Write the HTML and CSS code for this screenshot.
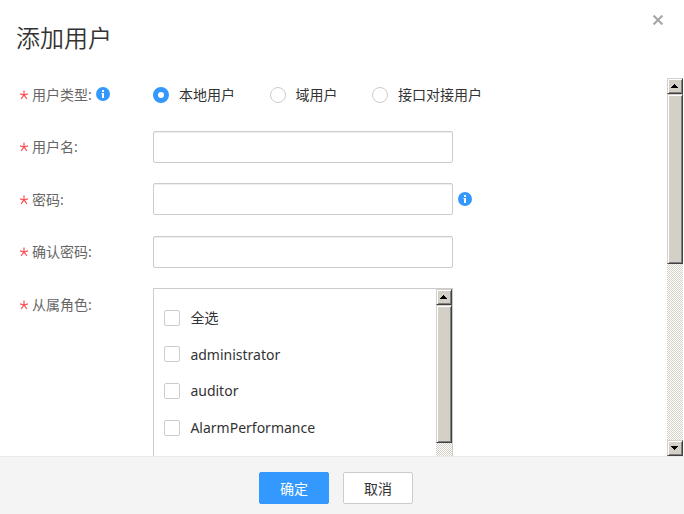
FILE: index.html
```html
<!DOCTYPE html>
<html lang="zh-CN">
<head>
<meta charset="utf-8">
<title>添加用户</title>
<link rel="stylesheet" href="styles.css">
</head>
<body>
<svg class="defs" width="0" height="0">
  <symbol id="star" viewBox="0 0 8 10"><path d="M4 .5V5M0 3.8 4 5 8 3.8M4 5 1.2 8.8M4 5 6.8 8.8" fill="none" stroke="#fa5055" stroke-width="1.2"/></symbol>
  <symbol id="info" viewBox="0 0 14 14"><circle cx="7" cy="7" r="7" fill="#39f"/><path d="M6 3h2v2H6zM5.5 6H8v5H6V7h-.5z" fill="#fff"/></symbol>
  <symbol id="up" viewBox="0 0 7 4"><path d="M3 0h1v1h1v1h1v1h1v1H0V3h1V2h1V1h1z"/></symbol>
  <symbol id="down" viewBox="0 0 7 4"><path d="M0 0h7v1H6v1H5v1H4v1H3V3H2V2H1V1H0z"/></symbol>
</svg>
<div class="dialog">
  <header class="head">
    <h1>添加用户</h1>
    <svg class="close" width="10" height="10" viewBox="0 0 10 10"><path d="M.6 .6l8.8 8.8M9.4 .6.6 9.4" stroke="#a6a6a6" stroke-width="2.1"/></svg>
  </header>
  <main class="body">
    <form class="form">
      <div class="row type">
        <div class="label"><svg class="star"><use href="#star"/></svg><span>用户类型:</span><svg class="info"><use href="#info"/></svg></div>
        <div class="radios">
          <label class="radio"><i class="dot on"></i>本地用户</label>
          <label class="radio"><i class="dot"></i>域用户</label>
          <label class="radio"><i class="dot"></i>接口对接用户</label>
        </div>
      </div>
      <div class="row">
        <div class="label"><svg class="star"><use href="#star"/></svg><span>用户名:</span></div>
        <input class="field" type="text">
      </div>
      <div class="row password">
        <div class="label"><svg class="star"><use href="#star"/></svg><span>密码:</span></div>
        <input class="field" type="password"><svg class="info"><use href="#info"/></svg>
      </div>
      <div class="row">
        <div class="label"><svg class="star"><use href="#star"/></svg><span>确认密码:</span></div>
        <input class="field" type="password">
      </div>
      <div class="row roles">
        <div class="label"><svg class="star"><use href="#star"/></svg><span>从属角色:</span></div>
        <div class="list">
          <div class="items">
            <label class="item"><i class="box"></i>全选</label>
            <label class="item"><i class="box"></i>administrator</label>
            <label class="item"><i class="box"></i>auditor</label>
            <label class="item"><i class="box"></i>AlarmPerformance</label>
          </div>
          <div class="bar"><div class="btn"><svg><use href="#up"/></svg></div><div class="thumb inner"></div></div>
        </div>
      </div>
    </form>
    <div class="bar"><div class="btn"><svg><use href="#up"/></svg></div><div class="thumb outer"></div><div class="btn last"><svg><use href="#down"/></svg></div></div>
  </main>
  <footer class="foot">
    <button class="action primary" type="button">确定</button>
    <button class="action" type="button">取消</button>
  </footer>
</div>
</body>
</html>
```
FILE: styles.css
```css
* { box-sizing: border-box; }
body { margin: 0; background: #fff; color: #333; font: 14px/20px "Noto Sans", "Noto Sans CJK SC", sans-serif; }
.defs { position: absolute; }
.dialog { width: 684px; height: 514px; display: flex; flex-direction: column; overflow: hidden; }
.head { height: 78px; flex: none; display: flex; justify-content: space-between; padding: 15px 21px 0 16px; }
h1 { margin: 6px 0 0; font-size: 24px; line-height: 34px; font-weight: 350; }
.close { display: block; }
.body { height: 378px; flex: none; display: flex; padding-right: 1px; overflow: hidden; }
.form { flex: 1; padding-left: 20px; }
.row { display: flex; align-items: center; height: 32px; margin-bottom: 20px; }
.row.type { height: 34px; margin-bottom: 19px; }
.row.password { margin-bottom: 21px; }
.row.roles { height: 168px; margin: 0; align-items: stretch; }
.label { width: 133px; height: 32px; flex: none; display: flex; align-items: center; color: #666; }
.password .label { height: 34px; padding-top: 2px; }
.roles .label { height: 34px; }
.star { width: 8px; height: 10px; margin-right: 4px; }
.info { width: 14px; height: 14px; margin-left: 5px; display: block; }
.label .info { margin: -2px 0 0 4px; }
.radios { display: flex; gap: 34.5px; }
.radio { display: flex; align-items: center; gap: 10px; }
.dot { width: 16px; height: 16px; border: 1px solid #ccc; border-radius: 50%; }
.dot.on { border: 5px solid #39f; }
.field { width: 300px; height: 32px; border: 1px solid #ccc; border-radius: 2px; padding: 0 8px; box-shadow: inset 0 1px 1px #eee; background: #fff; }
.list { width: 300px; display: flex; border: 1px solid #ccc; border-bottom: 0; }
.items { flex: 1; padding: 19px 0 0 10px; }
.item { height: 20px; margin-bottom: 16.6px; display: flex; align-items: center; gap: 10.4px; }
.box { width: 16px; height: 16px; border: 1px solid #ccc; border-radius: 2px; }
.item:nth-child(2) .box { margin-top: -2px; }
.bar { width: 16px; flex: none; display: flex; flex-direction: column; background: repeating-conic-gradient(#d4d0c8 0 25%, #fff 0 50%) 0 0 / 2px 2px; }
.btn, .thumb { flex: none; background: #d4d0c8; border: 1px solid; border-color: #d4d0c8 #404040 #404040 #d4d0c8; box-shadow: inset 1px 1px #fff, inset -1px -1px #808080; }
.btn { height: 16px; display: grid; place-items: center; }
.btn svg { width: 7px; height: 4px; display: block; margin-left: -1px; shape-rendering: crispEdges; }
.btn.last { margin-top: auto; }
.thumb.inner { height: 138px; }
.thumb.outer { height: 170px; }
.foot { height: 58px; flex: none; display: flex; justify-content: center; gap: 14px; padding: 15px 12px 0 0; background: #f4f4f4; border-top: 1px solid #eaeaea; }
.action { width: 70px; height: 32px; padding: 1px 0 0; border: 1px solid #ccc; border-radius: 2px; background: #fff; color: #333; font: inherit; }
.action.primary { background: #39f; border-color: #39f; color: #fff; }
```
